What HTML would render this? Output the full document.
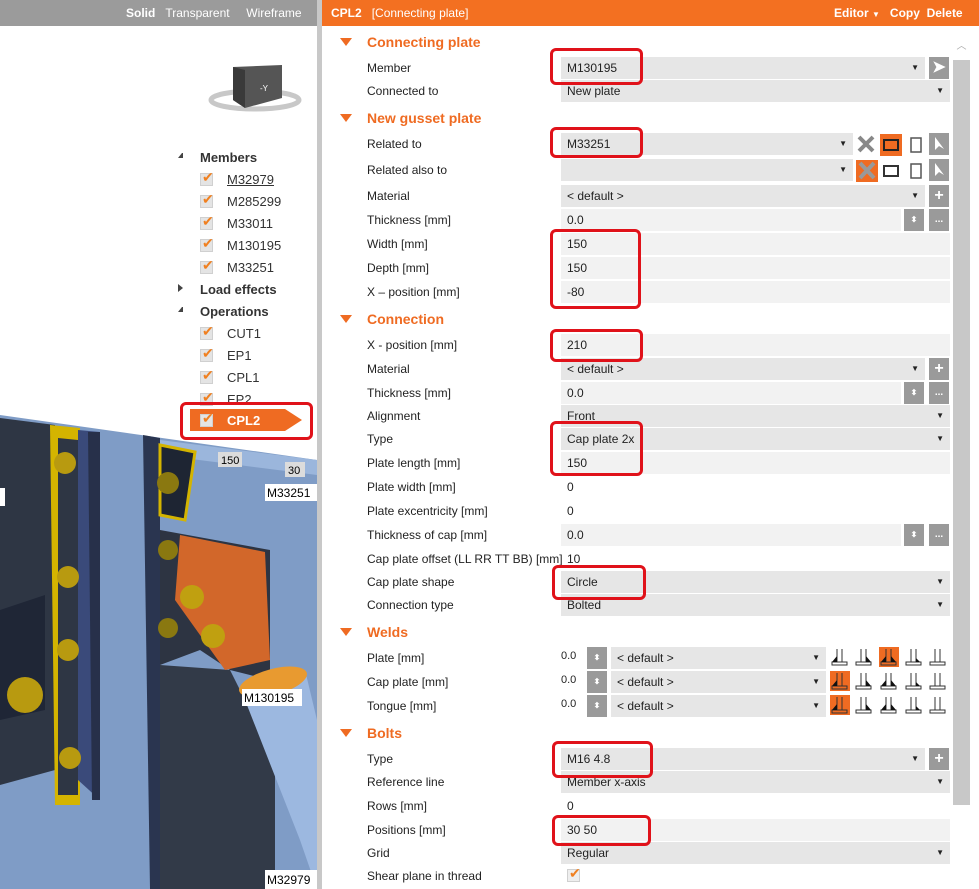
<!DOCTYPE html>
<html><head><meta charset="utf-8"><style>
*{margin:0;padding:0;box-sizing:border-box}
body{width:979px;height:889px;overflow:hidden;background:#fff;font-family:"Liberation Sans",sans-serif;font-size:12px;color:#222;position:relative}
.a{position:absolute}
.lbl{position:absolute;left:367px;font-size:12px;line-height:14px}
.sec{position:absolute;left:367px;font-size:14px;font-weight:bold;color:#ef6b22}
.tri{position:absolute;left:340px;width:0;height:0;border-left:6px solid transparent;border-right:6px solid transparent;border-top:8px solid #ef6b22}
.dd{position:absolute;background:#e6e6e6;height:22px;font-size:12px;line-height:22px;padding-left:6px}
.dd:after{content:"▼";position:absolute;right:6px;font-size:8px;top:0}
.tx{position:absolute;background:#f2f2f2;height:22px;line-height:22px;padding-left:6px;font-size:12px}
.pl{position:absolute;line-height:22px;padding-left:6px;font-size:12px}
.btn{position:absolute;width:20px;height:22px;background:#9a9a9a;color:#fff;text-align:center;line-height:22px;font-weight:bold;font-size:16px}
.red{position:absolute;border:3px solid #e0121a;border-radius:6px}
.tree{position:absolute;font-size:13px;color:#333}
.cb{position:absolute;width:13px;height:13px;background:#e4e4e4;border:1px solid #d0d0d0}
.cb:after{content:"✔";position:absolute;left:1px;top:-5px;color:#f08020;font-size:14px}
</style></head><body>
<div class="a" style="left:0;top:0;width:317px;height:26px;background:#9b9b9b"></div>
<div class="a" style="left:126px;top:6px;color:#fff;font-size:12px"><b>Solid</b>&nbsp;&nbsp;&nbsp;Transparent&nbsp;&nbsp;&nbsp;&nbsp;&nbsp;Wireframe</div>
<div class="a" style="left:317px;top:0;width:5px;height:889px;background:#c8c8c8"></div>
<svg class="a" style="left:0;top:400px" width="317" height="489">
<rect x="0" y="0" width="317" height="489" fill="#fff"/>
<polygon points="0,15 317,60 317,489 0,489" fill="#7f9cc6"/>
<polygon points="0,18 55,25 55,370 0,385" fill="#2e3644"/>
<polygon points="0,210 45,195 45,310 0,320" fill="#1f2636"/>
<polygon points="50,25 80,28 80,405 55,405" fill="#d4b400"/>
<polygon points="58,38 78,40 78,395 58,395" fill="#2e3644"/>
<polygon points="78,30 100,32 100,400 78,380" fill="#3a4a7a"/>
<polygon points="88,32 100,32 100,400 92,400" fill="#27304a"/>
<polygon points="143,35 160,38 160,489 150,489" fill="#2a3550"/>
<polygon points="160,40 317,60 317,75 160,55" fill="#9bb6dc"/>
<polygon points="160,130 270,150 270,280 230,270 200,250 160,265" fill="#2d3442"/>
<polygon points="160,265 230,270 275,360 275,489 160,489" fill="#323a48"/>
<polygon points="180,135 265,152 270,260 225,270 175,200" fill="#d2672a"/>
<polygon points="160,45 195,52 185,120 160,115" fill="#1e2533"/>
<polygon points="160,45 195,52 185,120 160,115" fill="none" stroke="#d4b400" stroke-width="3"/>
<polygon points="245,300 305,270 317,320 317,489 300,440" fill="#9cb8e0"/>
<ellipse cx="273" cy="282" rx="35" ry="13" fill="#e89a30" transform="rotate(-15 273 282)"/>
<circle cx="65" cy="63" r="11" fill="#b89a10"/><circle cx="68" cy="177" r="11" fill="#b89a10"/><circle cx="68" cy="250" r="11" fill="#b89a10"/><circle cx="70" cy="358" r="11" fill="#b89a10"/>
<circle cx="25" cy="295" r="18" fill="#b89a10"/><circle cx="192" cy="197" r="12" fill="#c0a010"/><circle cx="213" cy="236" r="12" fill="#c0a010"/>
<circle cx="168" cy="83" r="11" fill="#8a7810"/><circle cx="168" cy="150" r="10" fill="#8a7810"/><circle cx="168" cy="228" r="10" fill="#8a7810"/>
<rect x="0" y="88" width="5" height="18" fill="#fff"/>
<rect x="218" y="52" width="24" height="15" fill="#dcdcdc"/><text x="221" y="64" font-size="11" font-family="Liberation Sans">150</text>
<rect x="285" y="62" width="20" height="15" fill="#dcdcdc"/><text x="288" y="74" font-size="11" font-family="Liberation Sans">30</text>
<rect x="265" y="84" width="52" height="17" fill="#fff"/><text x="267" y="97" font-size="12" font-family="Liberation Sans">M33251</text>
<rect x="242" y="289" width="60" height="17" fill="#fff"/><text x="244" y="302" font-size="12" font-family="Liberation Sans">M130195</text>
<rect x="265" y="470" width="52" height="19" fill="#fff"/><text x="267" y="484" font-size="12" font-family="Liberation Sans">M32979</text>
</svg>
<svg class="a" style="left:205px;top:60px" width="100" height="55">
<ellipse cx="50" cy="40" rx="44" ry="9" fill="none" stroke="#c8c8c8" stroke-width="5"/>
<polygon points="28,7 77,5 77,38 40,48 28,40" fill="#555"/>
<polygon points="28,7 40,10 40,48 28,40" fill="#3a3a3a"/>
<text x="55" y="31" fill="#fff" font-size="8">-Y</text>
</svg>
<div class="a" style="left:178px;top:153px;border-left:4px solid transparent;border-right:0;border-bottom:5px solid #444;width:5px"></div>
<div class="tree" style="left:200px;top:150px;font-weight:bold">Members</div>
<div class="cb" style="left:200px;top:173px"></div><div class="tree" style="left:227px;top:172px;text-decoration:underline">M32979</div>
<div class="cb" style="left:200px;top:195px"></div><div class="tree" style="left:227px;top:194px">M285299</div>
<div class="cb" style="left:200px;top:217px"></div><div class="tree" style="left:227px;top:216px">M33011</div>
<div class="cb" style="left:200px;top:239px"></div><div class="tree" style="left:227px;top:238px">M130195</div>
<div class="cb" style="left:200px;top:261px"></div><div class="tree" style="left:227px;top:260px">M33251</div>
<div class="a" style="left:178px;top:284px;border-top:4px solid transparent;border-bottom:4px solid transparent;border-left:5px solid #444"></div>
<div class="tree" style="left:200px;top:282px;font-weight:bold">Load effects</div>
<div class="a" style="left:178px;top:307px;border-left:4px solid transparent;border-bottom:5px solid #444;width:5px"></div>
<div class="tree" style="left:200px;top:304px;font-weight:bold">Operations</div>
<div class="cb" style="left:200px;top:327px"></div><div class="tree" style="left:227px;top:326px">CUT1</div>
<div class="cb" style="left:200px;top:349px"></div><div class="tree" style="left:227px;top:348px">EP1</div>
<div class="cb" style="left:200px;top:371px"></div><div class="tree" style="left:227px;top:370px">CPL1</div>
<div class="cb" style="left:200px;top:393px"></div><div class="tree" style="left:227px;top:392px">EP2</div>
<svg class="a" style="left:190px;top:409px" width="113" height="23"><polygon points="0,0 95,0 112,11 95,22 0,22" fill="#ef6b22"/></svg>
<div class="cb" style="left:200px;top:414px"></div><div class="tree" style="left:227px;top:413px;color:#fff;font-weight:bold">CPL2</div>
<div class="red" style="left:180px;top:402px;width:133px;height:38px"></div>
<div class="a" style="left:322px;top:0;width:657px;height:26px;background:#f37021"></div>
<div class="a" style="left:331px;top:6px;color:#fff"><b>CPL2</b>&nbsp;&nbsp;&nbsp;[Connecting plate]</div>
<div class="a" style="left:834px;top:6px;color:#fff;font-weight:bold">Editor <span style="font-size:8px">▼</span>&nbsp;&nbsp;&nbsp;Copy&nbsp;&nbsp;Delete</div>
<div class="a" style="left:953px;top:37px;width:17px;height:22px;color:#aaa;text-align:center;font-size:10px">︿</div>
<div class="a" style="left:953px;top:60px;width:17px;height:745px;background:#c8c8c8"></div>

<div class="tri" style="top:38px"></div><div class="sec" style="top:34px">Connecting plate</div>
<div class="lbl" style="top:61px">Member</div><div class="dd" style="left:561px;top:57px;width:364px">M130195</div><div class="btn" style="left:929px;top:57px">➤</div>
<div class="lbl" style="top:84px">Connected to</div><div class="dd" style="left:561px;top:80px;width:389px">New plate</div>
<div class="tri" style="top:114px"></div><div class="sec" style="top:110px">New gusset plate</div>
<div class="lbl" style="top:137px">Related to</div><div class="dd" style="left:561px;top:133px;width:292px">M33251</div>
<div class="lbl" style="top:163px">Related also to</div><div class="dd" style="left:561px;top:159px;width:292px"></div>
<svg class="a" style="left:856px;top:133px" width="95" height="50">
<path d="M3,4 L17,18 M17,4 L3,18" stroke="#888" stroke-width="4"/>
<rect x="24" y="1" width="22" height="22" fill="#ef6b22"/><rect x="28" y="7" width="14" height="10" fill="none" stroke="#222" stroke-width="2"/>
<rect x="55" y="5" width="10" height="14" fill="none" stroke="#555" stroke-width="1.5"/>
<rect x="73" y="0" width="20" height="22" fill="#9a9a9a"/><path d="M79,4 L79,17 L83,13 L88,16 Z" fill="#fff"/>
<rect x="0" y="27" width="22" height="22" fill="#ef6b22"/><path d="M4,30 L18,45 M18,30 L4,45" stroke="#999" stroke-width="4"/>
<rect x="28" y="33" width="14" height="10" fill="none" stroke="#333" stroke-width="2"/>
<rect x="55" y="31" width="10" height="14" fill="none" stroke="#555" stroke-width="1.5"/>
<rect x="73" y="26" width="20" height="22" fill="#9a9a9a"/><path d="M79,30 L79,43 L83,39 L88,42 Z" fill="#fff"/>
</svg>
<div class="lbl" style="top:189px">Material</div><div class="dd" style="left:561px;top:185px;width:364px">&lt; default &gt;</div><div class="btn" style="left:929px;top:185px">+</div>
<div class="lbl" style="top:213px">Thickness [mm]</div><div class="tx" style="left:561px;top:209px;width:340px">0.0</div><div class="btn" style="left:904px;top:209px;font-size:8px">⬍</div><div class="btn" style="left:929px;top:209px;font-size:10px">...</div>
<div class="lbl" style="top:237px">Width [mm]</div><div class="tx" style="left:561px;top:233px;width:389px">150</div>
<div class="lbl" style="top:261px">Depth [mm]</div><div class="tx" style="left:561px;top:257px;width:389px">150</div>
<div class="lbl" style="top:285px">X – position [mm]</div><div class="tx" style="left:561px;top:281px;width:389px">-80</div>
<div class="tri" style="top:315px"></div><div class="sec" style="top:311px">Connection</div>
<div class="lbl" style="top:338px">X - position [mm]</div><div class="tx" style="left:561px;top:334px;width:389px">210</div>
<div class="lbl" style="top:362px">Material</div><div class="dd" style="left:561px;top:358px;width:364px">&lt; default &gt;</div><div class="btn" style="left:929px;top:358px">+</div>
<div class="lbl" style="top:386px">Thickness [mm]</div><div class="tx" style="left:561px;top:382px;width:340px">0.0</div><div class="btn" style="left:904px;top:382px;font-size:8px">⬍</div><div class="btn" style="left:929px;top:382px;font-size:10px">...</div>
<div class="lbl" style="top:409px">Alignment</div><div class="dd" style="left:561px;top:405px;width:389px">Front</div>
<div class="lbl" style="top:432px">Type</div><div class="dd" style="left:561px;top:428px;width:389px">Cap plate 2x</div>
<div class="lbl" style="top:456px">Plate length [mm]</div><div class="tx" style="left:561px;top:452px;width:389px">150</div>
<div class="lbl" style="top:480px">Plate width [mm]</div><div class="pl" style="left:561px;top:476px">0</div>
<div class="lbl" style="top:504px">Plate excentricity [mm]</div><div class="pl" style="left:561px;top:500px">0</div>
<div class="lbl" style="top:528px">Thickness of cap [mm]</div><div class="tx" style="left:561px;top:524px;width:340px">0.0</div><div class="btn" style="left:904px;top:524px;font-size:8px">⬍</div><div class="btn" style="left:929px;top:524px;font-size:10px">...</div>
<div class="lbl" style="top:552px">Cap plate offset (LL RR TT BB) [mm]</div><div class="pl" style="left:561px;top:548px">10</div>
<div class="lbl" style="top:575px">Cap plate shape</div><div class="dd" style="left:561px;top:571px;width:389px">Circle</div>
<div class="lbl" style="top:598px">Connection type</div><div class="dd" style="left:561px;top:594px;width:389px">Bolted</div>
<div class="tri" style="top:628px"></div><div class="sec" style="top:624px">Welds</div>
<div class="lbl" style="top:651px">Plate [mm]</div>
<div class="lbl" style="top:675px">Cap plate [mm]</div>
<div class="lbl" style="top:699px">Tongue [mm]</div>
<div class="pl" style="left:555px;top:645px;font-size:11px">0.0</div><div class="btn" style="left:587px;top:647px;font-size:8px">⬍</div><div class="dd" style="left:611px;top:647px;width:215px">&lt; default &gt;</div>
<div class="pl" style="left:555px;top:669px;font-size:11px">0.0</div><div class="btn" style="left:587px;top:671px;font-size:8px">⬍</div><div class="dd" style="left:611px;top:671px;width:215px">&lt; default &gt;</div>
<div class="pl" style="left:555px;top:693px;font-size:11px">0.0</div><div class="btn" style="left:587px;top:695px;font-size:8px">⬍</div><div class="dd" style="left:611px;top:695px;width:215px">&lt; default &gt;</div>
<svg class="a" style="left:828px;top:646px" width="125" height="72">
<rect x="51" y="1" width="20" height="20" fill="#ef6b22"/>
<rect x="2" y="25" width="20" height="20" fill="#ef6b22"/>
<rect x="2" y="49" width="20" height="20" fill="#ef6b22"/>
<g fill="none" stroke="#333"><path d="M9,3V16M14,3V16M4,16H19V19H4Z"/><path d="M9,3V16M14,3V16M4,16H19V19H4Z" transform="translate(24,0)"/><path d="M9,3V16M14,3V16M4,16H19V19H4Z" transform="translate(49,0)"/><path d="M9,3V16M14,3V16M4,16H19V19H4Z" transform="translate(74,0)"/><path d="M9,3V16M14,3V16M4,16H19V19H4Z" transform="translate(98,0)"/>
<path d="M9,3V16M14,3V16M4,16H19V19H4Z" transform="translate(0,24)"/><path d="M9,3V16M14,3V16M4,16H19V19H4Z" transform="translate(24,24)"/><path d="M9,3V16M14,3V16M4,16H19V19H4Z" transform="translate(49,24)"/><path d="M9,3V16M14,3V16M4,16H19V19H4Z" transform="translate(74,24)"/><path d="M9,3V16M14,3V16M4,16H19V19H4Z" transform="translate(98,24)"/>
<path d="M9,3V16M14,3V16M4,16H19V19H4Z" transform="translate(0,48)"/><path d="M9,3V16M14,3V16M4,16H19V19H4Z" transform="translate(24,48)"/><path d="M9,3V16M14,3V16M4,16H19V19H4Z" transform="translate(49,48)"/><path d="M9,3V16M14,3V16M4,16H19V19H4Z" transform="translate(74,48)"/><path d="M9,3V16M14,3V16M4,16H19V19H4Z" transform="translate(98,48)"/></g>
<g fill="#111"><path d="M4,16 L9,10 V16Z"/><path d="M38,16 L38,10 L43,16Z"/><path d="M53,16 L58,10 V16Z M63,16 V10 L68,16Z"/><path d="M88,16 V12 L92,16Z"/>
<path d="M4,40 L9,34 V40Z"/><path d="M38,40 V34 L43,40Z"/><path d="M53,40 L58,34 V40Z M63,40 V34 L68,40Z"/><path d="M88,40 V36 L92,40Z"/>
<path d="M4,64 L9,58 V64Z"/><path d="M38,64 V58 L43,64Z"/><path d="M53,64 L58,58 V64Z M63,64 V58 L68,64Z"/><path d="M88,64 V60 L92,64Z"/></g>
</svg>
<div class="tri" style="top:729px"></div><div class="sec" style="top:725px">Bolts</div>
<div class="lbl" style="top:752px">Type</div><div class="dd" style="left:561px;top:748px;width:364px">M16 4.8</div><div class="btn" style="left:929px;top:748px">+</div>
<div class="lbl" style="top:775px">Reference line</div><div class="dd" style="left:561px;top:771px;width:389px">Member x-axis</div>
<div class="lbl" style="top:799px">Rows [mm]</div><div class="pl" style="left:561px;top:795px">0</div>
<div class="lbl" style="top:823px">Positions [mm]</div><div class="tx" style="left:561px;top:819px;width:389px">30 50</div>
<div class="lbl" style="top:846px">Grid</div><div class="dd" style="left:561px;top:842px;width:389px">Regular</div>
<div class="lbl" style="top:869px">Shear plane in thread</div><div class="cb" style="left:567px;top:869px;background:#eee"></div>
<div class="red" style="left:550px;top:48px;width:93px;height:37px"></div>
<div class="red" style="left:550px;top:127px;width:93px;height:31px"></div>
<div class="red" style="left:550px;top:229px;width:91px;height:80px"></div>
<div class="red" style="left:550px;top:329px;width:93px;height:33px"></div>
<div class="red" style="left:550px;top:421px;width:93px;height:55px"></div>
<div class="red" style="left:552px;top:565px;width:94px;height:35px"></div>
<div class="red" style="left:552px;top:741px;width:101px;height:37px"></div>
<div class="red" style="left:552px;top:815px;width:99px;height:31px"></div>
</body></html>
